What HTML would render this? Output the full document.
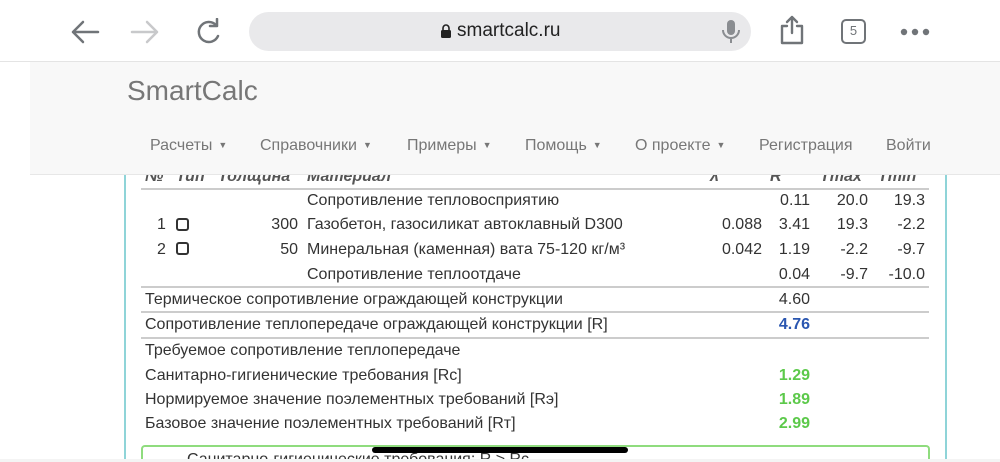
<!DOCTYPE html>
<html style="overflow:hidden;height:462px"><head><meta charset="utf-8"><style>
*{margin:0;padding:0;box-sizing:border-box}
body{width:1000px;height:462px;overflow:hidden;background:#fff;font-family:"Liberation Sans",sans-serif;position:relative;color:#333}
.a{position:absolute;white-space:nowrap}
.t{font-size:16px;line-height:18px}
.r{text-align:right}
.hl{position:absolute;left:141px;width:788px;height:2px;background:#ccc}
.cb{position:absolute;width:13px;height:13px;border:2.5px solid #333;border-radius:3px}
.nav{font-size:16px;color:#777}
.nav span.c{font-size:9px;margin-left:6px;vertical-align:2px}
.h{font-style:italic;font-weight:bold;color:#555}
</style></head><body>
<!-- browser bar -->
<svg class="a" style="left:68px;top:18px" width="160" height="30" viewBox="0 0 160 30">
<g fill="none" stroke-width="2.5" stroke-linecap="round" stroke-linejoin="round">
<path d="M30 14H5M15 4L5 14l10 10" stroke="#707478"/>
<path d="M64 14h25M79 4l10 10-10 10" stroke="#c8c9cb"/>
<path d="M148 7 A10 10 0 1 0 150 18" stroke="#707478"/>
<path d="M149 1v7h-7" stroke="#707478"/>
</g></svg>
<div class="a" style="left:249px;top:12px;width:502px;height:39px;border-radius:20px;background:#e9e9eb"></div>
<svg class="a" style="left:440px;top:23px" width="12" height="15"><path d="M3 7V5a3 3 0 0 1 6 0v2" stroke="#222" stroke-width="1.6" fill="none"/><rect x="1" y="7" width="10" height="8" rx="1.5" fill="#222"/></svg>
<div class="a" style="left:457px;top:20px;font-size:19px;color:#222">smartcalc.ru</div>
<svg class="a" style="left:720px;top:18px" width="22" height="28"><rect x="7" y="2" width="8" height="15" rx="4" fill="#8a8d91"/><path d="M3 12a8 8 0 0 0 16 0M11 20v5" stroke="#8a8d91" stroke-width="2" fill="none"/></svg>
<svg class="a" style="left:778px;top:14px" width="28" height="32"><g fill="none" stroke="#707478" stroke-width="2.4" stroke-linecap="round" stroke-linejoin="round"><path d="M9 12H4v17h20V12h-5M14 3v16M9 8l5-5 5 5"/></g></svg>
<div class="a" style="left:841px;top:19px;width:25px;height:25px;border:2.4px solid #707478;border-radius:5px;font-size:13px;text-align:center;line-height:20px;color:#707478">5</div>
<svg class="a" style="left:900px;top:28px" width="32" height="8"><circle cx="4" cy="4" r="3.2" fill="#707478"/><circle cx="15" cy="4" r="3.2" fill="#707478"/><circle cx="26" cy="4" r="3.2" fill="#707478"/></svg>
<div class="a" style="left:0;top:61px;width:1000px;height:1px;background:#e4e4e4"></div>

<!-- content panel borders -->
<div class="a" style="left:124px;top:170px;width:2px;height:292px;background:#8fd4d8"></div>
<div class="a" style="left:945px;top:170px;width:2px;height:292px;background:#8fd4d8"></div>

<!-- header row (clipped) -->
<div class="a t h" style="left:145px;top:168px">№</div>
<div class="a t h" style="left:176px;top:168px">Тип</div>
<div class="a t h" style="left:218px;top:168px">Толщина</div>
<div class="a t h" style="left:307px;top:168px">Материал</div>
<div class="a t h" style="left:710px;top:168px">λ</div>
<div class="a t h" style="left:770px;top:168px">R</div>
<div class="a t h" style="left:820px;top:168px">Tmax</div>
<div class="a t h" style="left:878px;top:168px">Tmin</div>
<div class="hl" style="top:188px"></div>

<!-- layer rows -->
<div class="a t" style="left:307px;top:192px">Сопротивление тепловосприятию</div>
<div class="a t r" style="left:760px;width:50px;top:192px">0.11</div>
<div class="a t r" style="left:810px;width:58px;top:192px">20.0</div>
<div class="a t r" style="left:868px;width:57px;top:192px">19.3</div>

<div class="a t" style="left:157px;top:216px">1</div><div class="cb" style="left:176px;top:218px"></div>
<div class="a t r" style="left:240px;width:58px;top:216px">300</div>
<div class="a t" style="left:307px;top:216px">Газобетон, газосиликат автоклавный D300</div>
<div class="a t r" style="left:700px;width:62px;top:216px">0.088</div>
<div class="a t r" style="left:760px;width:50px;top:216px">3.41</div>
<div class="a t r" style="left:810px;width:58px;top:216px">19.3</div>
<div class="a t r" style="left:868px;width:57px;top:216px">-2.2</div>

<div class="a t" style="left:157px;top:241px">2</div><div class="cb" style="left:176px;top:242px"></div>
<div class="a t r" style="left:240px;width:58px;top:241px">50</div>
<div class="a t" style="left:307px;top:241px">Минеральная (каменная) вата 75-120 кг/м³</div>
<div class="a t r" style="left:700px;width:62px;top:241px">0.042</div>
<div class="a t r" style="left:760px;width:50px;top:241px">1.19</div>
<div class="a t r" style="left:810px;width:58px;top:241px">-2.2</div>
<div class="a t r" style="left:868px;width:57px;top:241px">-9.7</div>

<div class="a t" style="left:307px;top:266px">Сопротивление теплоотдаче</div>
<div class="a t r" style="left:760px;width:50px;top:266px">0.04</div>
<div class="a t r" style="left:810px;width:58px;top:266px">-9.7</div>
<div class="a t r" style="left:868px;width:57px;top:266px">-10.0</div>
<div class="hl" style="top:286px"></div>

<div class="a t" style="left:145px;top:291px">Термическое сопротивление ограждающей конструкции</div>
<div class="a t r" style="left:760px;width:50px;top:291px">4.60</div>
<div class="hl" style="top:311px"></div>
<div class="a t" style="left:145px;top:316px">Сопротивление теплопередаче ограждающей конструкции [R]</div>
<div class="a t r" style="left:760px;width:50px;top:316px;color:#2a56b0;font-weight:bold">4.76</div>
<div class="hl" style="top:337px"></div>

<div class="a t" style="left:145px;top:342px">Требуемое сопротивление теплопередаче</div>
<div class="a t" style="left:145px;top:367px">Санитарно-гигиенические требования [Rc]</div>
<div class="a t r" style="left:760px;width:50px;top:367px;color:#5cc94a;font-weight:bold">1.29</div>
<div class="a t" style="left:145px;top:391px">Нормируемое значение поэлементных требований [Rэ]</div>
<div class="a t r" style="left:760px;width:50px;top:391px;color:#5cc94a;font-weight:bold">1.89</div>
<div class="a t" style="left:145px;top:415px">Базовое значение поэлементных требований [Rт]</div>
<div class="a t r" style="left:760px;width:50px;top:415px;color:#5cc94a;font-weight:bold">2.99</div>

<div class="a" style="left:141px;top:445px;width:789px;height:17px;border:2px solid #8fdc7e;border-bottom:none;border-radius:4px 4px 0 0"></div>
<div class="a t" style="left:187px;top:451px">Санитарно-гигиенические требования: R &gt; Rc</div>
<div class="a" style="left:372px;top:447px;width:256px;height:6px;border-radius:3px;background:#000"></div>
<div class="a" style="left:0;top:459px;width:1000px;height:3px;background:#f4f4f4"></div>

<!-- navbar -->
<div class="a" style="left:30px;top:62px;width:970px;height:113px;background:#f8f8f8;border-bottom:1px solid #e7e7e7"></div>
<div class="a" style="left:127px;top:75px;font-size:28px;color:#777">SmartCalc</div>
<div class="a nav" style="left:150px;top:137px">Расчеты<span class="c">▼</span></div>
<div class="a nav" style="left:260px;top:137px">Справочники<span class="c">▼</span></div>
<div class="a nav" style="left:407px;top:137px">Примеры<span class="c">▼</span></div>
<div class="a nav" style="left:525px;top:137px">Помощь<span class="c">▼</span></div>
<div class="a nav" style="left:635px;top:137px">О проекте<span class="c">▼</span></div>
<div class="a nav" style="left:759px;top:137px">Регистрация</div>
<div class="a nav" style="left:886px;top:137px">Войти</div>
</body></html>
